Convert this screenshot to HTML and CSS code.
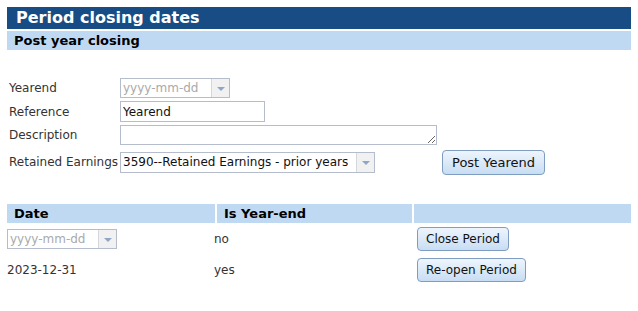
FILE: index.html
```html
<!DOCTYPE html>
<html lang="en">

<head>
    <meta charset="UTF-8">
    <title>Period closing dates</title>
    <link rel="stylesheet" href="styles.css">
</head>

<body>
    <h1 class="pageTitle">Period closing dates</h1>
    <h2 class="sectionTitle">Post year closing</h2>

    <div class="yearForm">
        <label class="fieldLabel">Yearend</label>
        <div class="fieldCell">
            <div class="combo comboDate">
                <span class="comboValue placeholder">yyyy-mm-dd</span>
                <span class="comboArrow"></span>
            </div>
        </div>

        <label class="fieldLabel">Reference</label>
        <div class="fieldCell">
            <input class="textInput refInput" type="text" value="Yearend">
        </div>

        <label class="fieldLabel">Description</label>
        <div class="fieldCell">
            <textarea class="textInput descInput"></textarea>
        </div>

        <label class="fieldLabel">Retained Earnings</label>
        <div class="fieldCell fieldRow">
            <div class="combo comboAccount">
                <span class="comboValue">3590--Retained Earnings - prior years</span>
                <span class="comboArrow"></span>
            </div>
            <button class="btn postBtn">Post Yearend</button>
        </div>
    </div>

    <div class="periodTable">
        <div class="tableHead">
            <div class="headCell headDate">Date</div>
            <div class="headCell headYe">Is Year-end</div>
            <div class="headCell headAction"></div>
        </div>
        <div class="tableRow">
            <div class="cell">
                <div class="combo comboDate">
                    <span class="comboValue placeholder">yyyy-mm-dd</span>
                    <span class="comboArrow"></span>
                </div>
            </div>
            <div class="cell">no</div>
            <div class="cell"><button class="btn">Close Period</button></div>
        </div>
        <div class="tableRow">
            <div class="cell">2023-12-31</div>
            <div class="cell">yes</div>
            <div class="cell"><button class="btn">Re-open Period</button></div>
        </div>
    </div>
</body>

</html>
```

FILE: styles.css
```css
body {
    font-family: 'DejaVu Sans', Verdana, sans-serif;
    font-size: 12px;
    color: #222;
    margin: 7px;
    background-color: #fff;
}

.pageTitle {
    margin: 0;
    width: 624px;
    height: 22px;
    line-height: 22px;
    padding-left: 9px;
    box-sizing: border-box;
    background-color: #174c84;
    color: #fff;
    font-size: 16px;
    font-weight: bold;
}

.sectionTitle {
    margin: 2px 0 0 0;
    width: 624px;
    height: 19px;
    line-height: 19px;
    padding-left: 7px;
    box-sizing: border-box;
    background-color: #bfd9f3;
    color: #000;
    font-size: 13px;
    font-weight: bold;
}

.yearForm {
    display: grid;
    grid-template-columns: 111px auto;
    row-gap: 3px;
    margin-top: 28px;
    padding-left: 2px;
    align-items: center;
}

.fieldLabel {
    color: #333;
}

.fieldRow {
    display: flex;
    align-items: center;
    margin-top: 2px;
}

.combo {
    display: flex;
    height: 20px;
    box-sizing: border-box;
    border: 1px solid #b5bdcc;
    background-color: #fff;
}

.comboValue {
    flex: 1;
    padding-left: 2px;
    line-height: 18px;
    white-space: nowrap;
    overflow: hidden;
    color: #111;
}

.comboValue.placeholder {
    color: #aaa;
}

.comboArrow {
    width: 17px;
    border-left: 1px solid #d4d8de;
    background-color: #f1f1f1;
    position: relative;
}

.comboArrow::after {
    content: "";
    position: absolute;
    left: 5px;
    top: 8px;
    border-left: 4px solid transparent;
    border-right: 4px solid transparent;
    border-top: 4px solid #8fa6c6;
}

.comboDate {
    width: 110px;
}

.comboAccount {
    width: 255px;
    height: 21px;
}

.comboAccount .comboValue {
    line-height: 19px;
}

.textInput {
    font-family: 'DejaVu Sans', Verdana, sans-serif;
    font-size: 12px;
    border: 1px solid #b5bdcc;
    box-sizing: border-box;
    margin: 0;
    padding: 0 2px;
    color: #111;
}

.refInput {
    width: 145px;
    height: 21px;
}

.descInput {
    width: 317px;
    height: 20px;
    display: block;
}

.btn {
    font-family: 'DejaVu Sans', Verdana, sans-serif;
    font-size: 12px;
    color: #111;
    height: 24px;
    padding: 0 8px;
    border: 1px solid #7f9dc1;
    border-radius: 4px;
    background: linear-gradient(#eef5fd, #c8ddf3);
    cursor: pointer;
}

.btn:hover {
    background: linear-gradient(#f5f9fe, #d5e6f7);
}

.postBtn {
    margin-left: 67px;
    height: 25px;
    padding: 0 9px;
    font-size: 13px;
}

.periodTable {
    margin-top: 29px;
    width: 624px;
}

.tableHead {
    display: flex;
    gap: 2px;
    height: 19px;
}

.headCell {
    background-color: #bfd9f3;
    color: #000;
    font-weight: bold;
    font-size: 13px;
    line-height: 19px;
    padding-left: 7px;
    box-sizing: border-box;
}

.headDate {
    width: 208px;
}

.headYe {
    width: 195px;
}

.headAction {
    flex: 1;
}

.tableRow {
    display: grid;
    grid-template-columns: 207px 202px 1fr;
    align-items: center;
    height: 31px;
}

.cell {
    color: #333;
}

.cell .btn {
    margin-left: 1px;
}
```
